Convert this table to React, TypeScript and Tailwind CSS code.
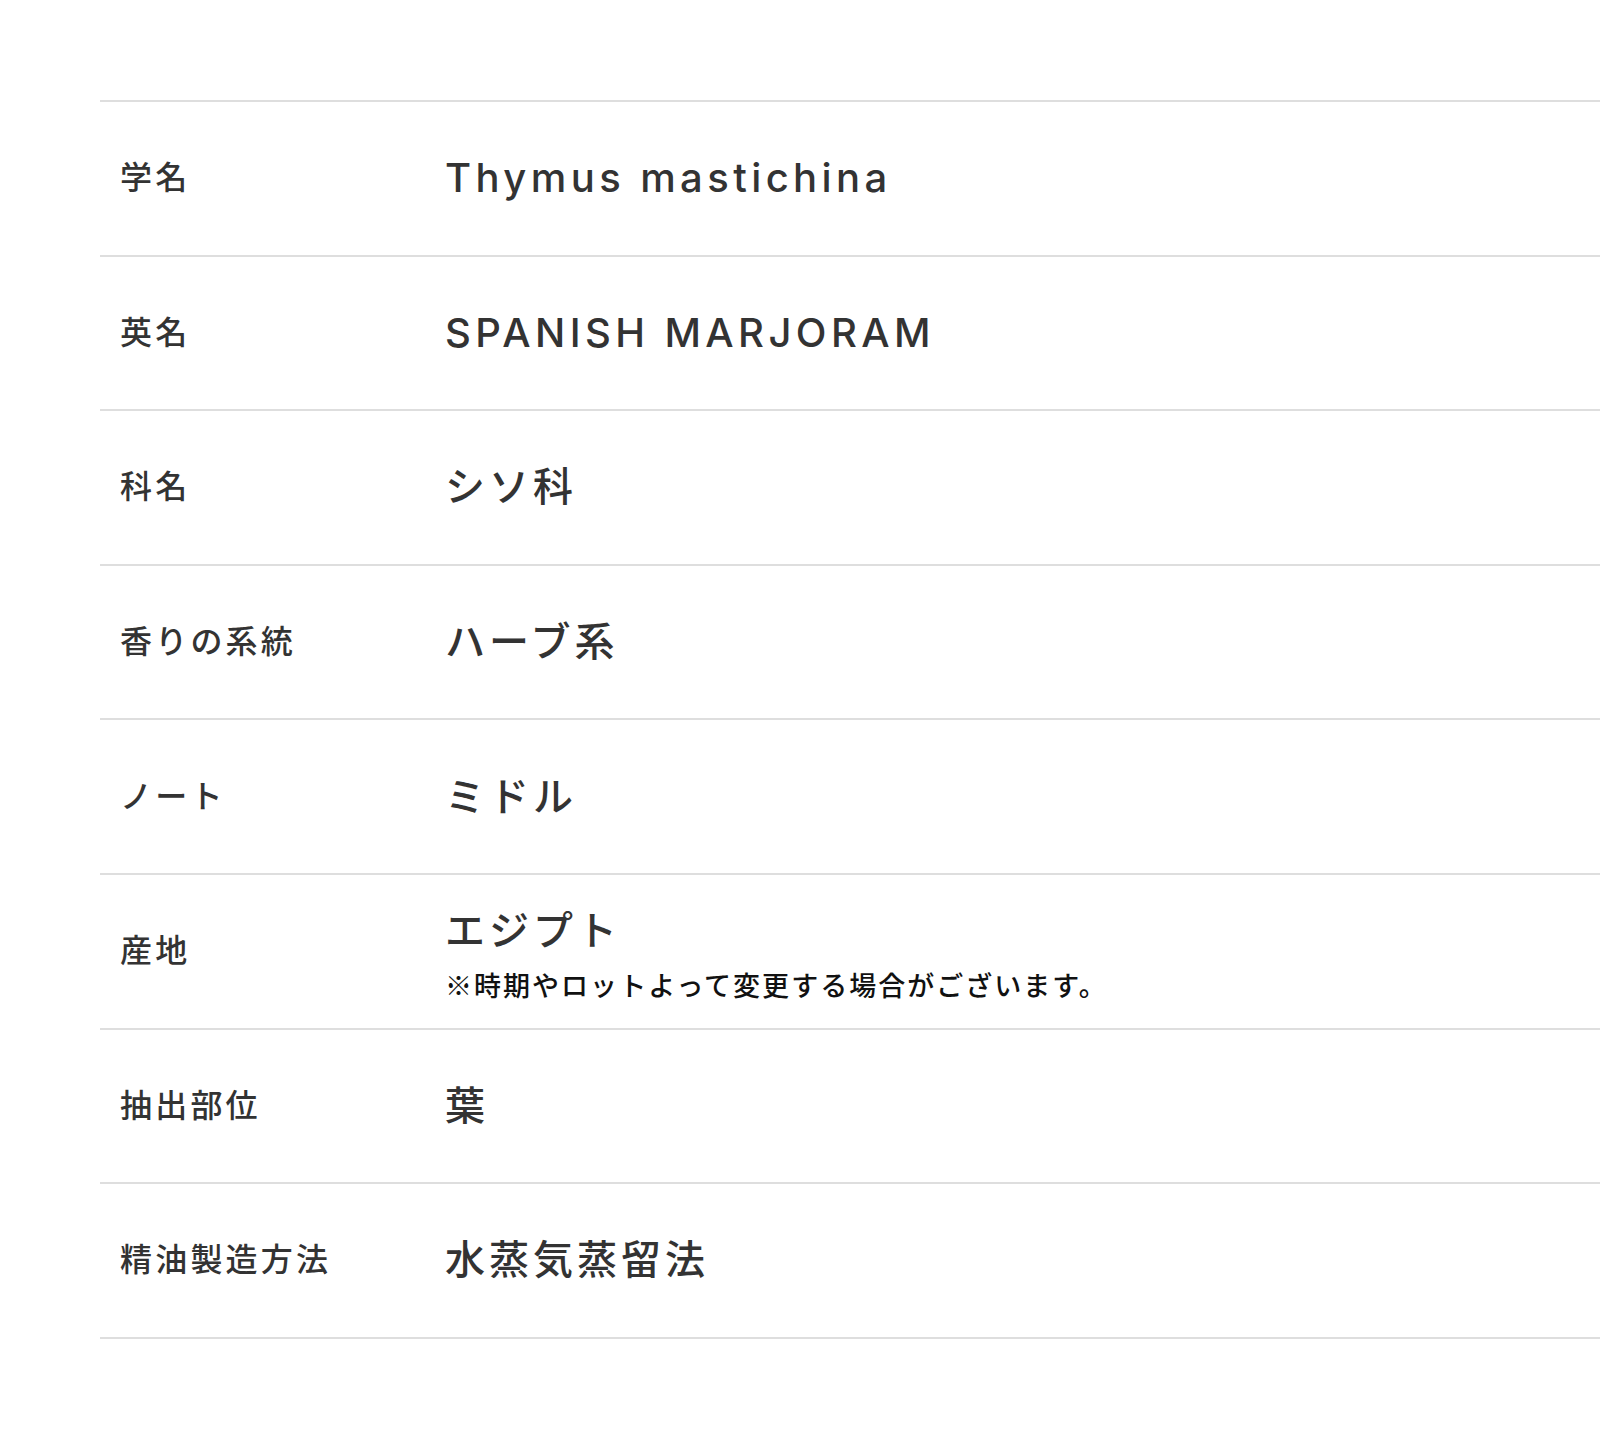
import React from "react";

const rows: { label: string; value: string; note?: string; latin?: boolean }[] = [
  { label: "学名", value: "Thymus mastichina", latin: true },
  { label: "英名", value: "SPANISH MARJORAM", latin: true },
  { label: "科名", value: "シソ科" },
  { label: "香りの系統", value: "ハーブ系" },
  { label: "ノート", value: "ミドル" },
  { label: "産地", value: "エジプト", note: "※時期やロットよって変更する場合がございます。" },
  { label: "抽出部位", value: "葉" },
  { label: "精油製造方法", value: "水蒸気蒸留法" },
];

export default function App() {
  return (
    <div
      className="w-[1600px] h-[1440px] bg-white overflow-hidden pt-[100px]"
      style={{ fontFamily: "Inter, 'Noto Sans CJK JP', sans-serif" }}
    >
      <div className="ml-[100px] border-t-2 border-[#dedede]">
        {rows.map((r) => (
          <div
            key={r.label}
            className="flex items-center h-[152.6px] border-b-2 border-[#dedede] box-content"
          >
            <div className="w-[345px] pl-[20px] text-[32px] tracking-[0.1em] text-[#333] leading-none font-medium">
              {r.label}
            </div>
            <div className={r.note ? "flex flex-col pt-[7px]" : "flex flex-col"}>
              <div
                className={
                  r.latin
                    ? "text-[40px] tracking-[0.11em] text-[#333] leading-none font-medium"
                    : "text-[40px] tracking-[0.1em] text-[#333] leading-none font-medium"
                }
              >
                {r.value}
              </div>
              {r.note && (
                <div
                  className="mt-[20px] text-[27px] tracking-[0.075em] text-[#111] leading-none font-medium"
                  style={{ fontFamily: "'Noto Sans CJK JP', sans-serif" }}
                >
                  {r.note}
                </div>
              )}
            </div>
          </div>
        ))}
      </div>
    </div>
  );
}
